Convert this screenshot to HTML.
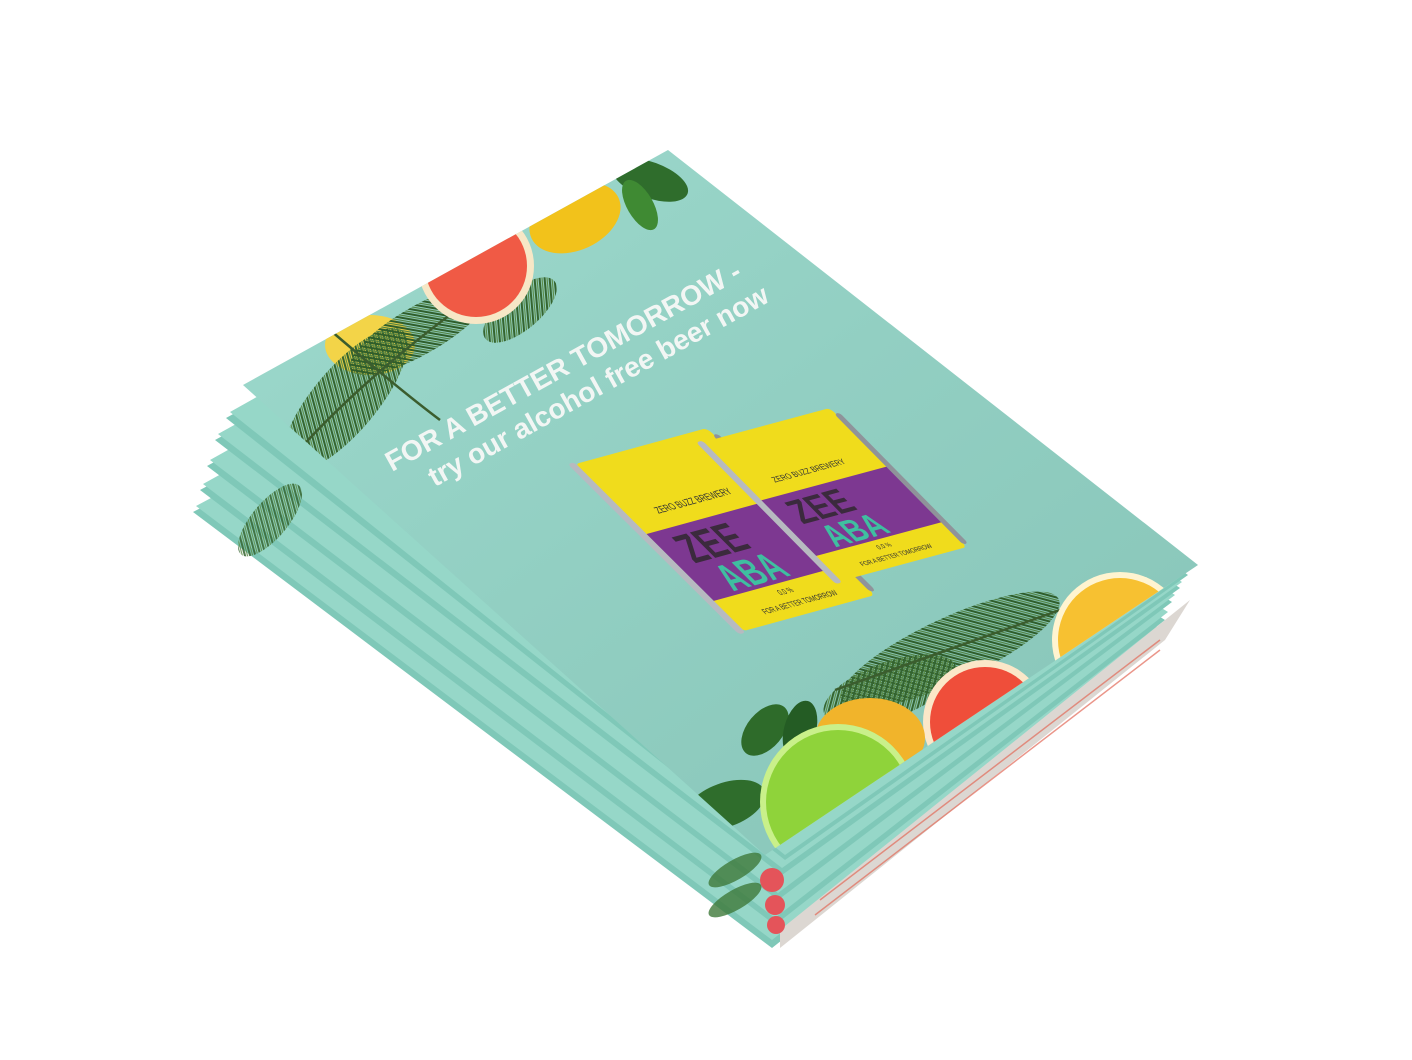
<!DOCTYPE html>
<html><head><meta charset="utf-8"><style>
html,body{margin:0;padding:0;background:#fff;width:1412px;height:1060px;overflow:hidden}
svg{display:block}
text{font-family:"Liberation Sans",sans-serif}
</style></head><body>
<svg width="1412" height="1060" viewBox="0 0 1412 1060" xmlns="http://www.w3.org/2000/svg">
<defs>
<clipPath id="cov"><polygon points="243,385 668,150 1198,565 765,855"/></clipPath>
<linearGradient id="sh" x1="0" y1="0" x2="1" y2="1"><stop offset="0" stop-color="#fff" stop-opacity="0.1"/><stop offset="1" stop-color="#000" stop-opacity="0.08"/></linearGradient>
<pattern id="pine" width="5" height="8" patternUnits="userSpaceOnUse" patternTransform="rotate(35)">
<line x1="1" y1="0" x2="1" y2="8" stroke="#35652f" stroke-width="2.2"/><line x1="3.5" y1="0" x2="3.5" y2="8" stroke="#5a8a45" stroke-width="1.2"/></pattern>
<pattern id="pine2" width="5" height="8" patternUnits="userSpaceOnUse" patternTransform="rotate(-50)">
<line x1="1" y1="0" x2="1" y2="8" stroke="#2f5e2b" stroke-width="2.2"/><line x1="3.5" y1="0" x2="3.5" y2="8" stroke="#4f8040" stroke-width="1.2"/></pattern>
<g id="can">
<rect x="2" y="0" width="98" height="100" rx="3" fill="#f0dc1c"/>
<rect x="2" y="42" width="98" height="40" fill="#7d3891"/>
<rect x="-2" y="-1" width="5" height="102" rx="2" fill="#b7bac0"/>
<rect x="99" y="4" width="4" height="94" rx="2" fill="#8f939a"/>
<text x="22" y="34" font-size="5" fill="#333">ZERO BUZZ BREWERY</text>
<text x="14" y="62" font-size="22" font-weight="bold" fill="#3b2a3d" font-family="Liberation Serif">ZEE</text>
<text x="20" y="80" font-size="20" font-weight="bold" fill="#3fbfa0" font-family="Liberation Serif">ABA</text>
<text x="45" y="88" font-size="4" fill="#333">0.0 %</text>
<text x="25" y="95" font-size="4" fill="#333">FOR A BETTER TOMORROW</text>
</g>
</defs>
<polygon points="193,512 600,300 1160,640 772,948" fill="#7fc8b8"/>
<polygon points="196,506 600,290 1162,630 772,940" fill="#96d7c8"/>
<polygon points="200,490 605,272 1165,620 775,925" fill="#7fc8b8"/>
<polygon points="203,484 605,262 1168,612 775,918" fill="#96d7c8"/>
<polygon points="207,466 610,245 1172,602 778,900" fill="#7fc8b8"/>
<polygon points="210,460 612,236 1175,595 778,893" fill="#96d7c8"/>
<polygon points="215,440 620,218 1180,588 782,875" fill="#7fc8b8"/>
<polygon points="218,434 622,210 1182,582 782,868" fill="#96d7c8"/>
<polygon points="226,418 640,190 1188,575 785,860" fill="#7fc8b8"/>
<polygon points="230,412 640,182 1190,570 785,855" fill="#96d7c8"/>
<polygon points="1190,600 1165,640 780,948 780,930 1165,620" fill="#dcd7d2"/>
<g stroke="#e26b5a" stroke-width="1.5" opacity="0.7"><line x1="820" y1="900" x2="1160" y2="640"/><line x1="815" y1="915" x2="1160" y2="650"/></g>
<g fill="url(#pine)" opacity="0.85"><ellipse cx="270" cy="520" rx="45" ry="18" transform="rotate(-50 270 520)"/></g>
<g fill="#3f7a3a" opacity="0.8"><ellipse cx="735" cy="870" rx="30" ry="10" transform="rotate(-30 735 870)"/><ellipse cx="735" cy="900" rx="30" ry="10" transform="rotate(-30 735 900)"/></g>
<g fill="#e4545a"><circle cx="772" cy="880" r="12"/><circle cx="775" cy="905" r="10"/><circle cx="776" cy="925" r="9"/></g>
<polygon points="243,385 668,150 1198,565 765,855" fill="#93d6c8"/>
<polygon points="243,385 668,150 1198,565 765,855" fill="url(#sh)"/>
<g clip-path="url(#cov)">
<ellipse cx="370" cy="345" rx="45" ry="30" fill="#f3d448"/>
<ellipse cx="345" cy="400" rx="90" ry="32" fill="url(#pine)" transform="rotate(-50 345 400)"/>
<ellipse cx="420" cy="330" rx="80" ry="24" fill="url(#pine2)" transform="rotate(-30 420 330)"/>
<ellipse cx="520" cy="310" rx="45" ry="20" fill="url(#pine)" transform="rotate(-40 520 310)"/>
<g stroke="#3b5d2e" stroke-width="2.5" fill="none"><path d="M290,460 Q360,380 470,300"/><path d="M330,330 Q400,390 440,420"/></g>
<ellipse cx="650" cy="180" rx="40" ry="18" fill="#2f6d2c" transform="rotate(20 650 180)"/>
<ellipse cx="640" cy="205" rx="28" ry="13" fill="#3f8a33" transform="rotate(60 640 205)"/>
<ellipse cx="575" cy="218" rx="48" ry="32" fill="#f2c21b" transform="rotate(-25 575 218)"/>
<circle cx="476" cy="266" r="58" fill="#f7e7c6"/>
<circle cx="476" cy="266" r="51" fill="#f05a45"/>
<ellipse cx="950" cy="650" rx="120" ry="32" fill="url(#pine2)" transform="rotate(-25 950 650)"/>
<ellipse cx="890" cy="690" rx="70" ry="28" fill="url(#pine)" transform="rotate(-20 890 690)"/>
<g stroke="#3b5d2e" stroke-width="2.5"><path d="M835,690 L1060,610"/></g>
<circle cx="1120" cy="640" r="68" fill="#fff4d0"/>
<circle cx="1120" cy="640" r="62" fill="#f7c131"/>
<circle cx="985" cy="722" r="62" fill="#fbe7c8"/>
<circle cx="985" cy="722" r="55" fill="#ef4e3a"/>
<ellipse cx="870" cy="738" rx="55" ry="40" fill="#f1b42b"/>
<ellipse cx="765" cy="730" rx="30" ry="18" fill="#2e6b2a" transform="rotate(-50 765 730)"/>
<ellipse cx="800" cy="730" rx="30" ry="16" fill="#245c24" transform="rotate(-75 800 730)"/>
<ellipse cx="725" cy="805" rx="42" ry="22" fill="#2f6d2c" transform="rotate(-20 725 805)"/>
<circle cx="838" cy="802" r="78" fill="#c9f08a"/>
<circle cx="838" cy="802" r="72" fill="#8fd33a"/>
</g>
<g transform="translate(392,472) rotate(-29)">
<text x="0" y="0" font-size="28" font-weight="bold" fill="#f2f6f4">FOR A BETTER TOMORROW -</text>
<text x="30" y="34" font-size="28" font-weight="bold" fill="#f2f6f4">try our alcohol free beer now</text>
</g>
<use href="#can" transform="matrix(1.35,-0.37,1.68,1.67,572,465)"/>
<use href="#can" transform="matrix(1.3,-0.35,1.37,1.39,700,443)"/>
</svg>
</body></html>
